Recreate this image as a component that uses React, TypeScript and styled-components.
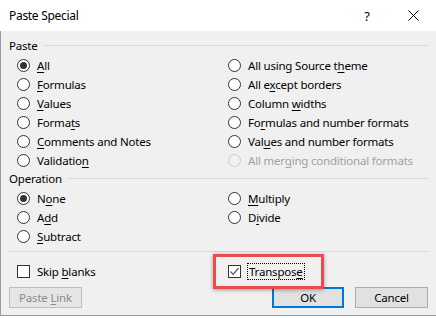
import React from "react";
import styled, { createGlobalStyle } from "styled-components";

const Global = createGlobalStyle`
  html, body { margin: 0; padding: 0; background: #ffffff; }
  body {
    font-family: "Noto Sans", "Liberation Sans", sans-serif;
    font-size: 11.5px;
    letter-spacing: -0.2px;
    color: #000;
  }
  * { box-sizing: border-box; }
`;

const Window = styled.div`
  width: 436px;
  height: 318px;
  display: flex;
  flex-direction: column;
  background: #ffffff;
`;

const TitleBar = styled.div`
  height: 31px;
  display: flex;
  align-items: center;
  padding-left: 9px;
  background: #ffffff;
`;

const Title = styled.div`
  flex: 1;
  font-size: 12px;
  letter-spacing: -0.3px;
  padding-bottom: 1px;
`;

const TitleButton = styled.div<{ $w: number }>`
  width: ${(p) => p.$w}px;
  height: 31px;
  display: flex;
  align-items: center;
  justify-content: center;
  font-size: 13px;
`;

const Body = styled.div`
  height: 285px;
  background: #f0f0f0;
  border-left: 1px solid #9a9a9a;
  border-bottom: 1px solid #9a9a9a;
  display: flex;
  flex-direction: column;
  padding: 6px 8px 0 8px;
  position: relative;
`;

const Legend = styled.div`
  height: 16px;
  display: flex;
  align-items: center;
  gap: 6px;
`;

const LegendLine = styled.div`
  flex: 1;
  height: 1px;
  background: #d8d8d8;
  margin-top: 1px;
`;

const Grid = styled.div`
  display: grid;
  grid-template-columns: 211px 1fr;
  grid-auto-flow: column;
  grid-template-rows: repeat(var(--rows), 19px);
  padding: 3px 0 0 8px;
`;

const Option = styled.label<{ $disabled?: boolean }>`
  display: flex;
  align-items: center;
  gap: 7px;
  height: 19px;
  color: ${(p) => (p.$disabled ? "#a0a0a0" : "#000")};
  white-space: nowrap;
`;

const RadioCircle = styled.span<{ $checked?: boolean; $disabled?: boolean }>`
  width: 13px;
  height: 13px;
  border-radius: 50%;
  border: 1px solid ${(p) => (p.$disabled ? "#cccccc" : "#333333")};
  background: ${(p) => (p.$disabled ? "#f0f0f0" : "#ffffff")};
  display: flex;
  align-items: center;
  justify-content: center;
  flex-shrink: 0;
  &::after {
    content: "";
    width: 7px;
    height: 7px;
    border-radius: 50%;
    background: #333333;
    display: ${(p) => (p.$checked ? "block" : "none")};
  }
`;

const Separator = styled.div`
  height: 1px;
  background: #d8d8d8;
  margin-top: 5px;
`;

const CheckRow = styled.div`
  display: grid;
  grid-template-columns: 211px 1fr;
  padding: 10px 0 0 8px;
  height: 28px;
`;

const CheckBox = styled.span<{ $checked?: boolean }>`
  width: 13px;
  height: 13px;
  border: 1px solid #333333;
  background: #ffffff;
  display: flex;
  align-items: center;
  justify-content: center;
  flex-shrink: 0;
`;

const FocusLabel = styled.span`
  outline: 1px dotted #000;
  outline-offset: 0px;
  padding: 0 1px;
  line-height: 15px;
`;

const Highlight = styled.div`
  position: absolute;
  left: 212px;
  top: 223px;
  width: 111px;
  height: 35px;
  border: 3px solid #eb4a4f;
  box-shadow: 0 1px 4px rgba(0, 0, 0, 0.35);
  pointer-events: none;
`;

const ButtonRow = styled.div`
  display: flex;
  align-items: center;
  padding-top: 7px;
`;

const Button = styled.button<{ $variant?: "default" | "disabled" }>`
  height: 21px;
  font-family: inherit;
  font-size: 11.5px;
  letter-spacing: -0.2px;
  padding: 0 0 1px 0;
  border: ${(p) =>
    p.$variant === "default" ? "2px solid #0078d7" : p.$variant === "disabled" ? "1px solid #bfbfbf" : "1px solid #adadad"};
  background: ${(p) => (p.$variant === "disabled" ? "#e5e5e5" : "#e1e1e1")};
  color: ${(p) => (p.$variant === "disabled" ? "#8a8a8a" : "#000")};
  display: flex;
  align-items: center;
  justify-content: center;
`;

const PasteLinkButton = styled(Button)`
  width: 73px;
`;

const OkButton = styled(Button)`
  width: 72px;
  margin-left: auto;
`;

const CancelButton = styled(Button)`
  width: 73px;
  margin-left: 11px;
`;

const U = styled.span`
  text-decoration: underline;
  text-underline-offset: 2px;
`;

type Opt = { pre: string; key: string; post: string; checked?: boolean; disabled?: boolean };

const pasteOptions: Opt[] = [
  { pre: "", key: "A", post: "ll", checked: true },
  { pre: "", key: "F", post: "ormulas" },
  { pre: "", key: "V", post: "alues" },
  { pre: "Forma", key: "t", post: "s" },
  { pre: "", key: "C", post: "omments and Notes" },
  { pre: "Validatio", key: "n", post: "" },
  { pre: "All using Source t", key: "h", post: "eme" },
  { pre: "All e", key: "x", post: "cept borders" },
  { pre: "Column ", key: "w", post: "idths" },
  { pre: "Fo", key: "r", post: "mulas and number formats" },
  { pre: "Val", key: "u", post: "es and number formats" },
  { pre: "All mer", key: "g", post: "ing conditional formats", disabled: true },
];

const operationOptions: (Opt | null)[] = [
  { pre: "N", key: "o", post: "ne", checked: true },
  { pre: "A", key: "d", post: "d" },
  { pre: "", key: "S", post: "ubtract" },
  { pre: "", key: "M", post: "ultiply" },
  { pre: "D", key: "i", post: "vide" },
  null,
];

function Radio({ o }: { o: Opt }) {
  return (
    <Option $disabled={o.disabled}>
      <RadioCircle $checked={o.checked} $disabled={o.disabled} />
      <span>
        {o.pre}
        <U>{o.key}</U>
        {o.post}
      </span>
    </Option>
  );
}

export default function App() {
  return (
    <>
      <Global />
      <Window>
        <TitleBar>
          <Title>Paste Special</Title>
          <TitleButton $w={46}>?</TitleButton>
          <TitleButton $w={46}>
            <svg width="11" height="11" viewBox="0 0 11 11">
              <path d="M0.5 0.5 L10.5 10.5 M10.5 0.5 L0.5 10.5" stroke="#000" strokeWidth="1" fill="none" />
            </svg>
          </TitleButton>
        </TitleBar>
        <Body>
          <Legend>
            <span>Paste</span>
            <LegendLine />
          </Legend>
          <Grid style={{ ["--rows" as any]: 6 }}>
            {pasteOptions.map((o, i) => (
              <Radio key={i} o={o} />
            ))}
          </Grid>
          <Legend>
            <span>Operation</span>
            <LegendLine />
          </Legend>
          <Grid style={{ ["--rows" as any]: 3 }}>
            {operationOptions.map((o, i) => (o ? <Radio key={i} o={o} /> : <span key={i} />))}
          </Grid>
          <Separator />
          <CheckRow>
            <Option>
              <CheckBox />
              <span>
                Skip <U>b</U>lanks
              </span>
            </Option>
            <Option>
              <CheckBox $checked>
                <svg width="11" height="11" viewBox="0 0 11 11">
                  <path d="M1.5 5.5 L4.2 8.3 L9.5 2" stroke="#555" strokeWidth="1.2" fill="none" />
                </svg>
              </CheckBox>
              <FocusLabel>
                Transpos<U>e</U>
              </FocusLabel>
            </Option>
          </CheckRow>
          <ButtonRow>
            <PasteLinkButton $variant="disabled">
              <span>
                Paste <U>L</U>ink
              </span>
            </PasteLinkButton>
            <OkButton $variant="default">OK</OkButton>
            <CancelButton>Cancel</CancelButton>
          </ButtonRow>
          <Highlight />
        </Body>
      </Window>
    </>
  );
}
